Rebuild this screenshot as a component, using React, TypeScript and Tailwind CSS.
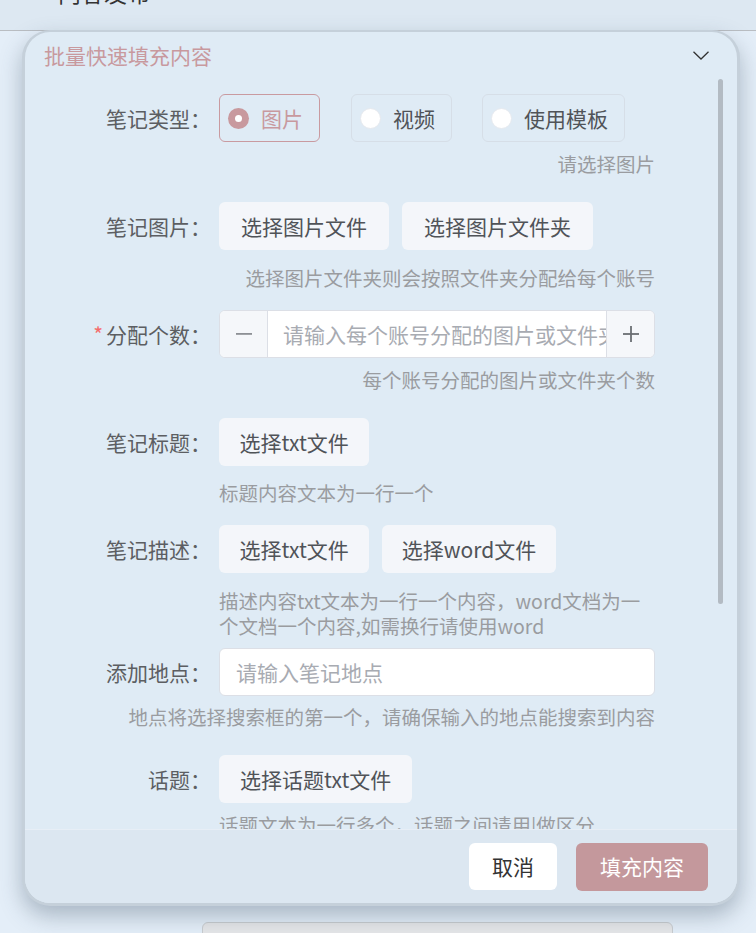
import React from 'react';
import clsx from 'clsx';

const FONT = "font-['Noto_Sans_CJK_SC','Noto_Sans',sans-serif]";

const Btn = ({ children, className }: { children: React.ReactNode; className?: string }) => (
  <button className={clsx('h-[48px] rounded-[6px] bg-[#f4f6fa] text-[21px] leading-none text-[#505358]', className ?? 'px-[22px]')}>
    {children}
  </button>
);

const Radio = ({ label, checked }: { label: string; checked?: boolean }) => (
  <label
    className={clsx(
      'h-[48px] flex items-center pl-[8px] pr-[16px] rounded-[6px] border',
      checked ? 'border-[#c99aa0] text-[#c8999e]' : 'border-[#d6dee7] text-[#505358]'
    )}
  >
    {checked ? (
      <span className="w-[21px] h-[21px] rounded-full bg-[#c8999e] flex items-center justify-center">
        <span className="w-[7px] h-[7px] rounded-full bg-white" />
      </span>
    ) : (
      <span className="w-[21px] h-[21px] rounded-full bg-white border border-[#e6e9ee]" />
    )}
    <span className="ml-[12px] text-[21px] leading-none">{label}</span>
  </label>
);

const Label = ({ children }: { children: React.ReactNode }) => (
  <div className="w-[186px] shrink-0 text-right text-[21px] leading-none text-[#5c5e62]">{children}</div>
);

const HintRight = ({ children, className }: { children: React.ReactNode; className?: string }) => (
  <div className={clsx('text-right text-[19.5px] leading-[24px] text-[#9a9ca0]', className)}>{children}</div>
);

const HintLeft = ({ children, className }: { children: React.ReactNode; className?: string }) => (
  <div className={clsx('pl-[194px] text-[19.5px] leading-[25px] text-[#9a9ca0]', className)}>{children}</div>
);

export default function App() {
  return (
    <div className={clsx('relative w-full h-[933px] overflow-hidden bg-[#e4eef8]', FONT)}>
      {/* page behind the dialog */}
      <div className="h-[31px] bg-[#dde8f2] border-b border-[#b9bdc2] overflow-hidden">
        <div className="pl-[58px] -mt-[23px] text-[23px] leading-[30px] text-[#333]">内容发布</div>
      </div>
      <div className="pt-[852px]">
        <div className="pl-[580px] h-[24px] text-[19px] leading-[24px] text-[#555]">发布记录 · 时</div>
        <div className="mt-[15px] ml-[202px] w-[471px] h-[40px] border border-[#c9cccf] bg-[#e5e6e8] rounded-t-[6px]" />
      </div>

      {/* dialog */}
      <div className="absolute left-[22px] top-[30px] w-[718px] h-[876px] flex flex-col overflow-hidden rounded-[28px] border-[3px] border-t-[2px] border-[#c5d0da] bg-[#dfebf5] shadow-[0_10px_22px_rgba(60,80,100,0.35)]">
        <div className="h-[47px] shrink-0 flex items-center justify-between pl-[19px] pr-[28px]">
          <span className="text-[21px] leading-none text-[#c8999e]">批量快速填充内容</span>
          <svg width="16" height="9" viewBox="0 0 16 9" fill="none" stroke="#333" strokeWidth="1.3">
            <polyline points="0.5,0.8 8,8 15.5,0.8" />
          </svg>
        </div>

        <div className="relative flex-1 overflow-hidden">
          <div className="pt-[15px] pr-[82px]">
            <div className="flex items-center gap-[8px]">
              <Label>笔记类型：</Label>
              <div className="flex items-center">
                <Radio label="图片" checked />
                <div className="ml-[31px]">
                  <Radio label="视频" />
                </div>
                <div className="ml-[30px]">
                  <Radio label="使用模板" />
                </div>
              </div>
            </div>
            <HintRight className="mt-[10px]">请选择图片</HintRight>

            <div className="mt-[26px] flex items-center gap-[8px]">
              <Label>笔记图片：</Label>
              <div className="flex items-center gap-[13px]">
                <Btn>选择图片文件</Btn>
                <Btn>选择图片文件夹</Btn>
              </div>
            </div>
            <HintRight className="mt-[16px]">选择图片文件夹则会按照文件夹分配给每个账号</HintRight>

            <div className="mt-[20px] flex items-center gap-[8px]">
              <Label>
                <span className="mr-[3px] text-[#f56c6c]">*</span>分配个数：
              </Label>
              <div className="flex-1 h-[48px] flex rounded-[6px] border border-[#dcdfe6] overflow-hidden bg-white">
                <div className="w-[48px] shrink-0 flex items-center justify-center bg-[#f5f7fa] border-r border-[#dcdfe6]">
                  <svg width="16" height="2" viewBox="0 0 16 2">
                    <rect width="16" height="1.8" fill="#8d9095" />
                  </svg>
                </div>
                <div className="flex-1 min-w-0 flex items-center pl-[15px] pr-[10px] overflow-hidden whitespace-nowrap text-[21px] leading-none text-[#a8abb2]">
                  请输入每个账号分配的图片或文件夹个数
                </div>
                <div className="w-[48px] shrink-0 flex items-center justify-center bg-[#f5f7fa] border-l border-[#dcdfe6]">
                  <svg width="16" height="16" viewBox="0 0 16 16">
                    <rect x="0" y="7.1" width="16" height="1.8" fill="#6b6e73" />
                    <rect x="7.1" y="0" width="1.8" height="16" fill="#6b6e73" />
                  </svg>
                </div>
              </div>
            </div>
            <HintRight className="mt-[10px]">每个账号分配的图片或文件夹个数</HintRight>

            <div className="mt-[26px] flex items-center gap-[8px]">
              <Label>笔记标题：</Label>
              <Btn className="px-[20.5px]">选择txt文件</Btn>
            </div>
            <HintLeft className="mt-[14px]">标题内容文本为一行一个</HintLeft>

            <div className="mt-[20px] flex items-center gap-[8px]">
              <Label>笔记描述：</Label>
              <div className="flex items-center gap-[13px]">
                <Btn className="px-[20.5px]">选择txt文件</Btn>
                <Btn className="px-[19.5px]">选择word文件</Btn>
              </div>
            </div>
            <HintLeft className="mt-[15px]">描述内容txt文本为一行一个内容，word文档为一个文档一个内容,如需换行请使用word</HintLeft>

            <div className="mt-[10px] flex items-center gap-[8px]">
              <Label>添加地点：</Label>
              <div className="flex-1 h-[48px] flex items-center pl-[16px] rounded-[6px] border border-[#dcdfe6] bg-white text-[21px] leading-none text-[#a8abb2]">
                请输入笔记地点
              </div>
            </div>
            <HintRight className="mt-[9px]">地点将选择搜索框的第一个，请确保输入的地点能搜索到内容</HintRight>

            <div className="mt-[26px] flex items-center gap-[8px]">
              <Label>话题：</Label>
              <Btn className="px-[21px]">选择话题txt文件</Btn>
            </div>
            <HintLeft className="mt-[9px]">话题文本为一行多个，话题之间请用|做区分</HintLeft>
          </div>

          {/* scrollbar thumb */}
          <div className="absolute right-[14px] top-0 w-[5px] h-[525px] rounded-full bg-[#b3bbc3]" />
        </div>

        <div className="h-[74px] shrink-0 flex items-center justify-end gap-[19px] pr-[29px] bg-[#dce7f1] border-t border-[#e7eef6]">
          <button className="h-[47px] px-[23px] rounded-[6px] bg-white text-[21px] leading-none text-[#333]">取消</button>
          <button className="h-[48px] px-[24px] rounded-[6px] bg-[#c4989c] text-[21px] leading-none text-white">填充内容</button>
        </div>
      </div>
    </div>
  );
}
